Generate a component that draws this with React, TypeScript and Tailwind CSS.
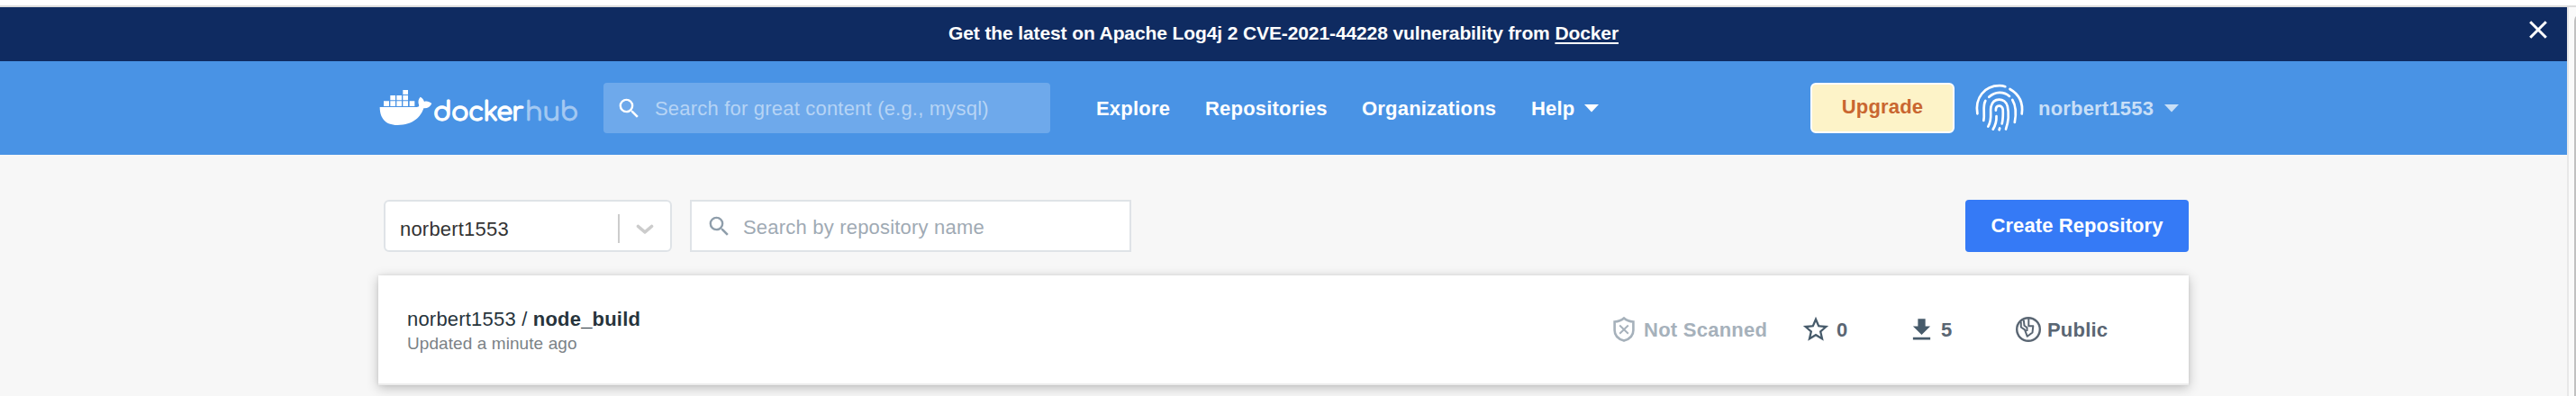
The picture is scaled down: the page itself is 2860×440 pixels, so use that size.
import type { ReactNode } from "react";
import { MdSearch, MdStarBorder, MdFileDownload } from "react-icons/md";

function Whale() {
  return (
    <svg className="mt-[31px] h-[41px] w-[60px] shrink-0" viewBox="15 27 180 123" fill="#fff">
      <path d="M97 30h17v15H97zM55 48h17v16H55zM76 48h17v16H76zM97 48h17v16H97zM33 67h18v17H33zM55 67h17v17H55zM76 67h17v17H76zM97 67h17v17H97zM119 67h17v17h-17z" />
      <path d="M20 87H142C150 87 152 84 150 79C147 70 148 60 155 53C162 57 166 62 168 69C176 66 186 69 193 75C188 86 179 92 166 91C157 119 132 147 79 147C36 147 20 121 20 87Z" />
    </svg>
  );
}

function Fingerprint() {
  return (
    <svg className="mt-[17px] ml-[15px] size-[70px] shrink-0" viewBox="0 0 70 70" fill="none" stroke="#fff" strokeWidth="2.700" strokeLinecap="round">
      <path d="M10.4 41.3C7.5 24 18 10.2 35 10.2Q38.5 10.2 41.3 11.2" />
      <path d="M46.5 14C57 20 61.500 29 59.700 41.500" />
      <path d="M23.300 22.800C30 16.500 39.500 16.300 46 21.900" />
      <path d="M19.300 27C15.800 33.500 19 41 17.300 49" />
      <path d="M49.300 26C53.500 33 53.300 43 51.800 51" />
      <path d="M22.300 55.600C27.500 47 24 40 25.500 33.500C28 23 41 23 43.800 33C45.300 40 45 50 42 58.500" />
      <path d="M27.700 58.700C30.500 54 31.800 49 31.500 44" />
      <path d="M30.900 37.700C30.500 31.200 38 31 38.700 36.500C39 42 39 47 37.700 52.500" />
      <path d="M35.200 57.500L34.600 59.300" />
    </svg>
  );
}

function Caret({ className }: { className: string }) {
  return (
    <svg className={className} viewBox="0 0 16 9" fill="currentColor">
      <path d="M0 0H16L8 8.500Z" />
    </svg>
  );
}

function NavLink({ width, children }: { width: string; children: ReactNode }) {
  return <a className={`mt-10 shrink-0 font-bold ${width}`}>{children}</a>;
}

function TopNav() {
  return (
    <nav className="flex h-[104px] items-start bg-[#4993e5] pl-[420px] text-[22px] leading-[25px] tracking-[0.2px] whitespace-nowrap text-white">
      <Whale />
      <div className="mt-[37px] flex h-[40px] w-[190px] shrink-0 pl-px font-[Comfortaa,Quicksand,Lato,sans-serif] text-[29px] leading-[40px]">
        <span className="w-[102px] tracking-[-0.600px] [-webkit-text-stroke:1.300px_#fff]">docker</span>
        <span className="text-[#a4c9f2] tracking-[-0.200px] [-webkit-text-stroke:0.800px_#a4c9f2]">hub</span>
      </div>
      <div className="mt-6 flex h-14 w-[496px] shrink-0 rounded bg-[#6ea9eb]">
        <MdSearch className="mt-[14px] ml-[14px] size-[29px] shrink-0" />
        <span className="mt-4 ml-[14px] text-[#b6d4f5]">Search for great content (e.g., mysql)</span>
      </div>
      <div className="w-[51px] shrink-0" />
      <NavLink width="w-[121px]">Explore</NavLink>
      <NavLink width="w-[174px]">Repositories</NavLink>
      <NavLink width="w-[188px]">Organizations</NavLink>
      <NavLink width="w-[59px]">Help</NavLink>
      <Caret className="mt-[48px] h-[9px] w-4 shrink-0" />
      <div className="mt-6 ml-[235px] flex h-14 w-40 shrink-0 justify-center rounded-md border-2 border-white bg-[#fdf3c8] pt-3 font-bold text-[#c96630]">
        Upgrade
      </div>
      <Fingerprint />
      <span className="mt-10 ml-2 w-[140px] shrink-0 font-bold text-[#c8dff7]">norbert1553</span>
      <Caret className="mt-[48px] h-[9px] w-4 shrink-0 text-[#c8dff7]" />
    </nav>
  );
}

function Banner() {
  return (
    <div className="flex h-[60px] items-start bg-[#0f2b61] text-[21px] leading-[23px] font-bold tracking-[-0.11px] whitespace-nowrap text-white">
      <span className="mt-[17px] w-[1755px] pl-[1053px]">
        Get the latest on Apache Log4j 2 CVE-2021-44228 vulnerability from{" "}
        <a className="underline decoration-2 underline-offset-[3px]">Docker</a>
      </span>
      <svg className="mt-[15px] ml-[1053px] size-5" viewBox="0 0 20 20" fill="none" stroke="currentColor" strokeWidth="3">
        <path d="M1.200 1.200L18.800 18.800M18.800 1.200L1.200 18.800" />
      </svg>
    </div>
  );
}

function Toolbar() {
  return (
    <div className="flex h-[58px] items-start pl-[6px] text-[22px] leading-[25px] tracking-[0.2px] whitespace-nowrap">
      <div className="flex h-[58px] w-80 rounded-md border-2 border-[#dfe3e7] bg-white">
        <span className="mt-[18px] ml-4 w-[242px] text-[#333]">norbert1553</span>
        <span className="mt-[14px] h-8 w-0.5 bg-[#ccc]" />
        <svg className="mt-[25px] ml-[18px] h-3 w-5" viewBox="0 0 20 12" fill="none" stroke="#ccc" strokeWidth="3.600" strokeLinecap="round" strokeLinejoin="round">
          <path d="M2.500 2.500L10 9L17.500 2.500" />
        </svg>
      </div>
      <div className="ml-5 flex h-[58px] w-[490px] border-2 border-[#dfe3e7] bg-white">
        <MdSearch className="mt-[13px] ml-4 size-[29px] text-[#8f9eab]" />
        <span className="mt-4 ml-3 text-[#9faab4]">Search by repository name</span>
      </div>
      <button className="ml-auto flex h-[58px] w-[248px] justify-center rounded bg-[#357af6] pt-4 font-bold tracking-[0.1px] text-white">
        Create Repository
      </button>
    </div>
  );
}

function ShieldX() {
  return (
    <svg className="mt-[46px] h-7 w-6 shrink-0" viewBox="0 0 24 28" fill="none" stroke="#a6b1bb" strokeWidth="2.600">
      <path d="M12 1.500C9 4.200 5.500 5.300 1.600 5.500V15C1.600 21 5.500 24.700 12 26.600C18.500 24.700 22.400 21 22.400 15V5.500C18.500 5.300 15 4.200 12 1.500Z" />
      <path d="M7.200 9.500L16.800 18.700M16.800 9.500L7.200 18.700" strokeWidth="1.900" />
    </svg>
  );
}

function Globe() {
  return (
    <svg className="mt-[46px] size-7 shrink-0" viewBox="0 0 28 28" fill="none" stroke="#5a6673" strokeLinejoin="round">
      <circle cx="14" cy="14" r="12.800" strokeWidth="2.400" />
      <path d="M5.800 5.500V11.500L10 14.300L12.800 21.800L18.500 17.500L19.300 10.300H14.300V2M8.800 3.500L9.500 9.800L12.500 12V16" strokeWidth="2" />
    </svg>
  );
}

function RepositoryCard() {
  return (
    <div className="mt-[26px] flex h-[122px] items-start border-b-2 border-[#ececec] bg-white pl-8 text-[22px] leading-[25px] tracking-[0.2px] whitespace-nowrap text-[#5a6673] shadow-[0_3px_12px_rgba(0,0,0,0.24),0_0_3px_rgba(0,0,0,0.08)]">
      <div className="mt-9 w-[1339px] shrink-0">
        <div className="text-[#27343c]">
          norbert1553 / <b>node_build</b>
        </div>
        <div className="mt-[4px] text-[19px] leading-[21px] tracking-[0.08px] text-[#7b8286]">Updated a minute ago</div>
      </div>
      <ShieldX />
      <span className="mt-12 ml-[10px] w-[174px] shrink-0 font-bold tracking-[0.25px] text-[#a6b1bb]">Not Scanned</span>
      <MdStarBorder className="mt-[43px] size-[34px] shrink-0 text-[#475b6b]" />
      <span className="mt-12 ml-[6px] w-[78px] shrink-0 font-bold">0</span>
      <MdFileDownload className="mt-11 size-[33px] shrink-0 text-[#475b6b]" />
      <span className="mt-12 ml-[5px] w-[83px] shrink-0 font-bold">5</span>
      <Globe />
      <span className="mt-12 ml-[7px] font-bold">Public</span>
    </div>
  );
}

export default function App() {
  return (
    <div className="flex h-[440px] w-[2860px] flex-col overflow-hidden bg-white font-['Liberation_Sans',Arial,sans-serif]">
      <div className="h-2 shrink-0 border-b-2 border-[#dcdcdc]" />
      <div className="flex h-[432px]">
        <div className="w-[2850px] shrink-0 bg-[#f7f7f7]">
          <Banner />
          <TopNav />
          <main className="w-[2430px] pt-[50px] pl-[420px]">
            <Toolbar />
            <RepositoryCard />
          </main>
        </div>
        <div className="w-[10px] shrink-0 overflow-hidden border-l-2 border-[#e8e8e8] bg-[#fafafa] pt-[7px] pl-[6px]">
          <div className="h-[500px] w-4 rounded-full bg-[#c1c1c1]" />
        </div>
      </div>
    </div>
  );
}
